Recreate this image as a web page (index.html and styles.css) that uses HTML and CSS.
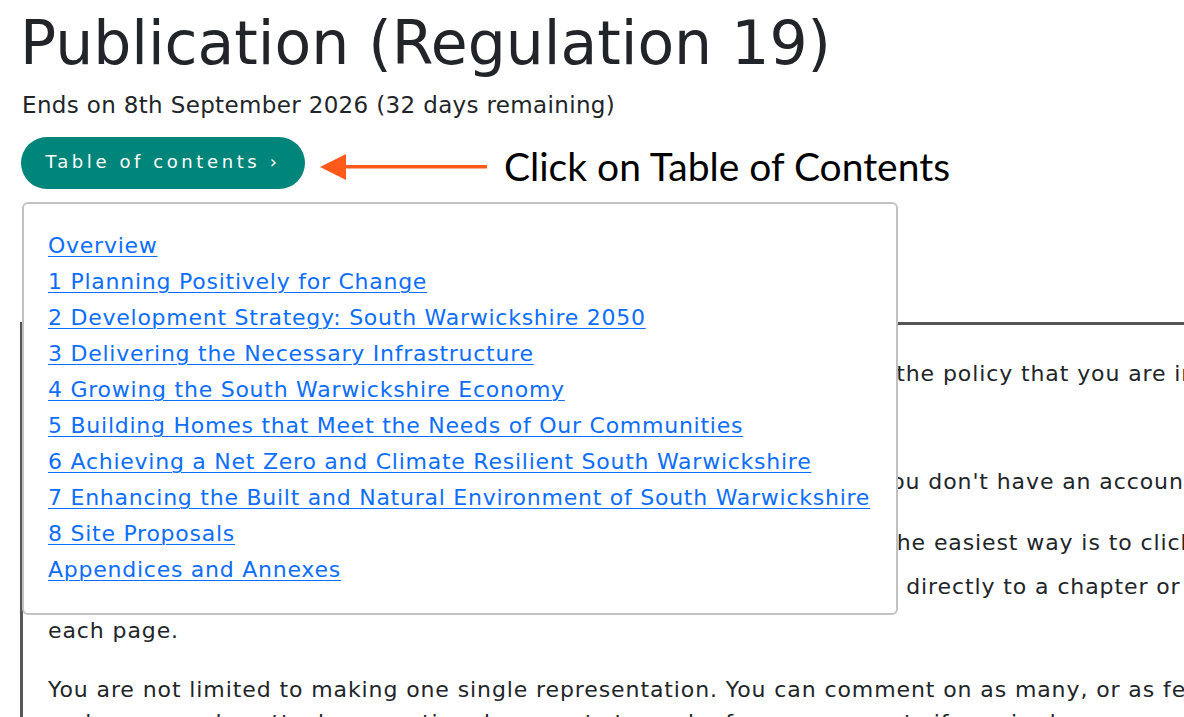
FILE: index.html
```html
<!DOCTYPE html>
<html lang="en">
<head>
<meta charset="utf-8">
<title>Publication (Regulation 19)</title>
<link rel="stylesheet" href="styles.css">
</head>
<body>
<main class="page">
  <h1 class="title">Publication (Regulation 19)</h1>
  <p class="ends">Ends on 8th September 2026 (32 days remaining)</p>

  <div class="toc-row">
    <button class="toc-btn" type="button">Table of contents ›</button>
    <svg class="arrow" width="172" height="30" viewBox="0 0 172 30" aria-hidden="true">
      <polygon points="3,15 29,2 29,28" fill="#ff5a1a"/>
      <rect x="27" y="13" width="143" height="3.5" fill="#ff5a1a"/>
    </svg>
    <span class="callout">Click on Table of Contents</span>

    <nav class="toc-menu">
      <ul>
        <li><a href="#">Overview</a></li>
        <li><a href="#">1 Planning Positively for Change</a></li>
        <li><a href="#">2 Development Strategy: South Warwickshire 2050</a></li>
        <li><a href="#">3 Delivering the Necessary Infrastructure</a></li>
        <li><a href="#">4 Growing the South Warwickshire Economy</a></li>
        <li><a href="#">5 Building Homes that Meet the Needs of Our Communities</a></li>
        <li><a href="#">6 Achieving a Net Zero and Climate Resilient South Warwickshire</a></li>
        <li><a href="#">7 Enhancing the Built and Natural Environment of South Warwickshire</a></li>
        <li><a href="#">8 Site Proposals</a></li>
        <li><a href="#">Appendices and Annexes</a></li>
      </ul>
    </nav>
  </div>

  <section class="card">
    <p class="first">Use the 'Table of Contents' to navigate through the document and find the policy that you are interested in commenting on.<br>Then read the policy text and the supporting information.</p>
    <p>To make a comment you will need to log in or register with us first. If you don't have an account, you can register for one quickly.</p>
    <p>There are a number of ways of navigating through this document, but the easiest way is to click on the<br>'Table of contents' button at the top of the page which allows you to go directly to a chapter or section, or use the buttons at the bottom of<br>each page.</p>
    <p class="last">You are not limited to making one single representation. You can comment on as many, or as few, policies as you wish<br>and you can also attach supporting documents to each of your comments if required.</p>
  </section>
</main>
</body>
</html>
```
FILE: styles.css
```css
html, body {
  margin: 0;
  padding: 0;
  background: #ffffff;
  overflow: hidden;
}

body {
  font-family: "DejaVu Sans", "Open Sans", sans-serif;
  color: #212529;
}

.page {
  padding: 6px 0 0 20px;
}

.title {
  margin: 0;
  font-size: 60px;
  font-weight: 400;
  line-height: 74px;
  letter-spacing: 0;
}

.ends {
  margin: 9px 0 0 2px;
  font-size: 23px;
  line-height: 32px;
  letter-spacing: 0.35px;
}

.toc-row {
  position: relative;
  display: flex;
  align-items: center;
  margin-top: 16px;
}

.toc-btn {
  height: 52px;
  width: 284px;
  margin-left: 1px;
  border: 0;
  border-radius: 26px;
  background: #00857a;
  color: #ffffff;
  font-family: "DejaVu Sans", "Open Sans", sans-serif;
  font-size: 18px;
  letter-spacing: 3.6px;
  padding: 0 0 3px 0;
}

.arrow {
  display: block;
  margin-left: 12px;
  margin-top: 8px;
}

.callout {
  margin-left: 15px;
  margin-top: 5px;
  font-family: Lato, "Liberation Sans", sans-serif;
  font-size: 39px;
  color: #000000;
  line-height: 40px;
}

.toc-menu {
  position: absolute;
  top: 65px;
  left: 2px;
  width: 872px;
  background: #ffffff;
  border: 2px solid #c2c2c2;
  border-radius: 6px;
  z-index: 2;
}

.toc-menu ul {
  list-style: none;
  margin: 0;
  padding: 24px 20px 25px 24px;
}

.toc-menu li {
  font-size: 22px;
  line-height: 36px;
  letter-spacing: 0.75px;
  white-space: nowrap;
}

.toc-menu a {
  color: #0d6efd;
  text-decoration: underline;
  text-decoration-thickness: 1px;
  text-underline-offset: 3px;
}

.card {
  margin-top: 133px;
  width: 1500px;
  border-top: 3px solid #555555;
  border-left: 3px solid #555555;
  padding: 27px 0 0 25px;
}

.card p {
  margin: 0 0 17px 0;
  font-size: 22px;
  line-height: 44px;
  letter-spacing: 0.9px;
  white-space: nowrap;
}

.card p.first {
  margin-bottom: 20px;
}

.card p.last {
  margin-top: 20px;
  line-height: 33px;
}
```
